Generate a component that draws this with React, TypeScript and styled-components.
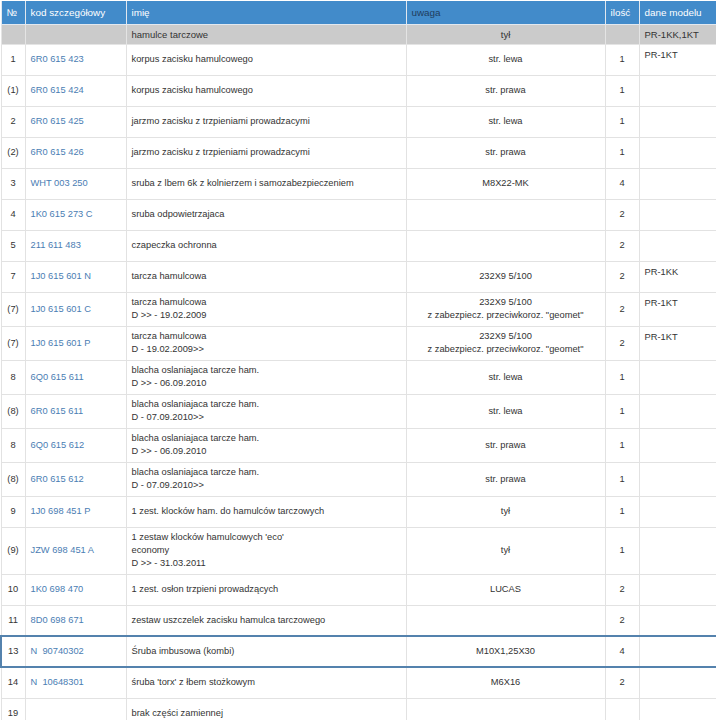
import React from "react";
import styled, { createGlobalStyle, css } from "styled-components";

const Global = createGlobalStyle`
  html, body { margin: 0; padding: 0; background: #fff; }
  body { font-family: "Liberation Sans", Arial, sans-serif; }
`;

const Table = styled.table`
  width: 716px;
  border-collapse: collapse;
  table-layout: fixed;
  font-family: "Liberation Sans", Arial, sans-serif;
  font-size: 9.3px;
  color: #333;
  margin-top: 1px;
`;

const HeadCell = styled.th<{ $dark?: boolean; $w: number }>`
  width: ${(p) => p.$w}px;
  background: #428bca;
  color: ${(p) => (p.$dark ? "#1f3d5e" : "#fff")};
  font-weight: normal;
  font-size: 9.9px;
  text-align: left;
  height: 23px;
  padding: 0 5px;
  box-sizing: border-box;
  border: 1px solid #e2e8ef;
  border-top: none;
  white-space: nowrap;
`;

const GroupRow = styled.tr`
  background: #cbcbcb;
  height: 20px;
`;

const GroupCell = styled.td<{ $center?: boolean }>`
  border: 1px solid #e4e4e4;
  padding: 0 5px;
  font-size: 9.5px;
  text-align: ${(p) => (p.$center ? "center" : "left")};
  vertical-align: middle;
`;

const Row = styled.tr`
  height: 31px;
`;

const Cell = styled.td<{
  $align?: "left" | "center";
  $top?: boolean;
  $active?: boolean;
  $first?: boolean;
  $last?: boolean;
}>`
  border: 1px solid #e2e2e2;
  padding: 3.5px 5px;
  line-height: 13px;
  text-align: ${(p) => p.$align || "left"};
  vertical-align: ${(p) => (p.$top ? "top" : "middle")};
  white-space: pre;
  ${(p) =>
    p.$top &&
    css`
      padding-top: 4px;
    `}
  ${(p) =>
    p.$active &&
    css`
      border-top: 2px solid #5482ad;
      border-bottom: 2px solid #5482ad;
    `}
  ${(p) =>
    p.$active &&
    p.$first &&
    css`
      border-left: 2px solid #5482ad;
    `}
  ${(p) =>
    p.$active &&
    p.$last &&
    css`
      border-right: 2px solid #5482ad;
    `}
`;

const NumCell = styled(Cell)`
  padding-left: 1px;
  padding-right: 1px;
`;

const Code = styled.a`
  color: #4a7db3;
  text-decoration: none;
  white-space: pre;
`;

const Line = styled.div`
  white-space: nowrap;
`;

type Part = {
  no: string;
  code: string;
  name: string[];
  note: string[];
  qty: string;
  model?: string;
  active?: boolean;
};

const blacha = "blacha oslaniajaca tarcze ham.";
const geo = ["232X9 5/100", 'z zabezpiecz. przeciwkoroz. "geomet"'];

const parts: Part[] = [
  { no: "1", code: "6R0 615 423", name: ["korpus zacisku hamulcowego"], note: ["str. lewa"], qty: "1", model: "PR-1KT" },
  { no: "(1)", code: "6R0 615 424", name: ["korpus zacisku hamulcowego"], note: ["str. prawa"], qty: "1" },
  { no: "2", code: "6R0 615 425", name: ["jarzmo zacisku z trzpieniami prowadzacymi"], note: ["str. lewa"], qty: "1" },
  { no: "(2)", code: "6R0 615 426", name: ["jarzmo zacisku z trzpieniami prowadzacymi"], note: ["str. prawa"], qty: "1" },
  { no: "3", code: "WHT 003 250", name: ["sruba z lbem 6k z kolnierzem i samozabezpieczeniem"], note: ["M8X22-MK"], qty: "4" },
  { no: "4", code: "1K0 615 273 C", name: ["sruba odpowietrzajaca"], note: [], qty: "2" },
  { no: "5", code: "211 611 483", name: ["czapeczka ochronna"], note: [], qty: "2" },
  { no: "7", code: "1J0 615 601 N", name: ["tarcza hamulcowa"], note: ["232X9 5/100"], qty: "2", model: "PR-1KK" },
  { no: "(7)", code: "1J0 615 601 C", name: ["tarcza hamulcowa", "D >> - 19.02.2009"], note: geo, qty: "2", model: "PR-1KT" },
  { no: "(7)", code: "1J0 615 601 P", name: ["tarcza hamulcowa", "D - 19.02.2009>>"], note: geo, qty: "2", model: "PR-1KT" },
  { no: "8", code: "6Q0 615 611", name: [blacha, "D >> - 06.09.2010"], note: ["str. lewa"], qty: "1" },
  { no: "(8)", code: "6R0 615 611", name: [blacha, "D - 07.09.2010>>"], note: ["str. lewa"], qty: "1" },
  { no: "8", code: "6Q0 615 612", name: [blacha, "D >> - 06.09.2010"], note: ["str. prawa"], qty: "1" },
  { no: "(8)", code: "6R0 615 612", name: [blacha, "D - 07.09.2010>>"], note: ["str. prawa"], qty: "1" },
  { no: "9", code: "1J0 698 451 P", name: ["1 zest. klocków ham. do hamulców tarczowych"], note: ["tył"], qty: "1" },
  { no: "(9)", code: "JZW 698 451 A", name: ["1 zestaw klocków hamulcowych 'eco'", "economy", "D >> - 31.03.2011"], note: ["tył"], qty: "1" },
  { no: "10", code: "1K0 698 470", name: ["1 zest. osłon trzpieni prowadzących"], note: ["LUCAS"], qty: "2" },
  { no: "11", code: "8D0 698 671", name: ["zestaw uszczelek zacisku hamulca tarczowego"], note: [], qty: "2" },
  { no: "13", code: "N  90740302", name: ["Śruba imbusowa (kombi)"], note: ["M10X1,25X30"], qty: "4", active: true },
  { no: "14", code: "N  10648301", name: ["śruba 'torx' z łbem stożkowym"], note: ["M6X16"], qty: "2" },
  { no: "19", code: "", name: ["brak części zamiennej"], note: [], qty: "" },
];

const cols = [
  { label: "№", w: 24 },
  { label: "kod szczegółowy", w: 101 },
  { label: "imię", w: 280 },
  { label: "uwaga", w: 199, dark: true },
  { label: "ilość", w: 34 },
  { label: "dane modelu", w: 78 },
];

export default function App() {
  return (
    <>
      <Global />
      <Table>
        <thead>
          <tr>
            {cols.map((c) => (
              <HeadCell key={c.label} $w={c.w} $dark={c.dark}>
                {c.label}
              </HeadCell>
            ))}
          </tr>
        </thead>
        <tbody>
          <GroupRow>
            <GroupCell />
            <GroupCell />
            <GroupCell>hamulce tarczowe</GroupCell>
            <GroupCell $center>tył</GroupCell>
            <GroupCell />
            <GroupCell>PR-1KK,1KT</GroupCell>
          </GroupRow>
          {parts.map((p, i) => (
            <Row key={i}>
              <NumCell $align="center" $active={p.active} $first>
                {p.no}
              </NumCell>
              <Cell $active={p.active}>
                <Code href="#">{p.code}</Code>
              </Cell>
              <Cell $active={p.active}>
                {p.name.map((l, j) => (
                  <Line key={j}>{l}</Line>
                ))}
              </Cell>
              <Cell $align="center" $active={p.active}>
                {p.note.map((l, j) => (
                  <Line key={j}>{l}</Line>
                ))}
              </Cell>
              <Cell $align="center" $active={p.active}>
                {p.qty}
              </Cell>
              <Cell $top $active={p.active} $last>
                {p.model || ""}
              </Cell>
            </Row>
          ))}
        </tbody>
      </Table>
    </>
  );
}
